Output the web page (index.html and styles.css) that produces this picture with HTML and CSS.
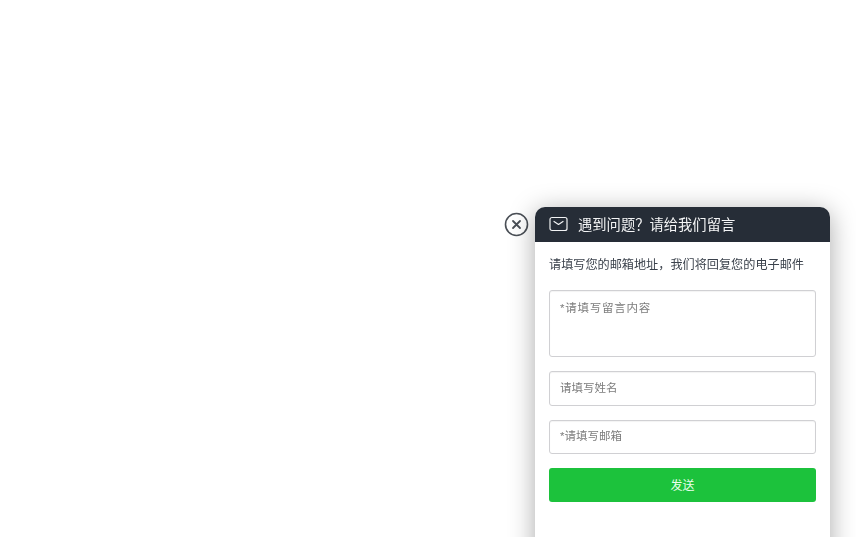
FILE: index.html
```html
<!DOCTYPE html>
<html lang="zh-CN">
<head>
<meta charset="utf-8">
<title>留言</title>
<link rel="stylesheet" href="styles.css">
</head>
<body>
<div class="widget">
  <button class="close" type="button" aria-label="关闭">
    <svg width="25" height="25" viewBox="0 0 25 25"><circle cx="12.5" cy="12.5" r="11" fill="#fff" stroke="#4a4f56" stroke-width="1.6"/><path d="M9 9l7 7M16 9l-7 7" fill="none" stroke="#4a4f56" stroke-width="1.800" stroke-linecap="round"/></svg>
  </button>
  <section class="panel">
    <header class="head">
      <svg class="mail" width="19" height="16" viewBox="0 0 19 16"><rect x="1" y="1.500" width="17" height="13" rx="2" fill="none" stroke="#f2f3f4" stroke-width="1.200"/><path d="M5 5.500l4.500 3 4.500-3" fill="none" stroke="#f2f3f4" stroke-width="1.200" stroke-linecap="round" stroke-linejoin="round"/></svg>
      <span class="title">遇到问题？请给我们留言</span>
    </header>
    <form class="body">
      <p class="intro">请填写您的邮箱地址，我们将回复您的电子邮件</p>
      <textarea class="field area" placeholder="*请填写留言内容"></textarea>
      <input class="field" type="text" placeholder="请填写姓名">
      <input class="field" type="text" placeholder="*请填写邮箱">
      <button class="send" type="button">发送</button>
    </form>
  </section>
</div>
</body>
</html>
```
FILE: styles.css
```css
* { box-sizing: border-box; }
html, body { margin: 0; height: 100%; overflow: hidden; background: #fff; }
body { font-family: "Liberation Sans", "Noto Sans CJK SC", sans-serif; }
.widget { position: fixed; left: 504px; top: 207px; display: flex; align-items: flex-start; gap: 6px; }
.close { margin: 5px 0 0; padding: 0; border: 0; background: none; width: 25px; height: 25px; display: block; }
.close svg { display: block; }
.panel { width: 295px; height: 360px; background: #fff; border-radius: 10px 10px 0 0; box-shadow: 0 4px 26px rgba(0,0,0,.34); overflow: hidden; }
.head { height: 35px; background: #262d37; display: flex; align-items: center; padding: 0 14px 1px; color: #fff; }
.mail { flex: none; }
.title { margin-left: 10px; margin-bottom: 1px; font-size: 14.300px; color: #f4f5f6; }
.body { padding: 14px 14px 0; display: flex; flex-direction: column; }
.intro { margin: 0 0 16px; font-size: 12.150px; line-height: 18px; color: #3a414b; }
.field { display: block; width: 267px; height: 34.500px; margin: 0 0 14px; padding: 0 10px 1px; border: 1px solid #d0d0d3; border-radius: 3px; background: #fff; font: 11.500px "Liberation Sans", "Noto Sans CJK SC", sans-serif; outline: 0; box-shadow: inset 0 1px 1px rgba(0,0,0,.05); }
.field::placeholder { color: #7c7c7c; opacity: 1; }
.area { height: 67px; padding: 8px 10px; resize: none; letter-spacing: .75px; }
.send { width: 267px; height: 34px; border: 0; border-radius: 3px; background: #1cc23c; color: #eaffef; font: 12px "Liberation Sans", "Noto Sans CJK SC", sans-serif; padding: 0 0 2px; }
```
